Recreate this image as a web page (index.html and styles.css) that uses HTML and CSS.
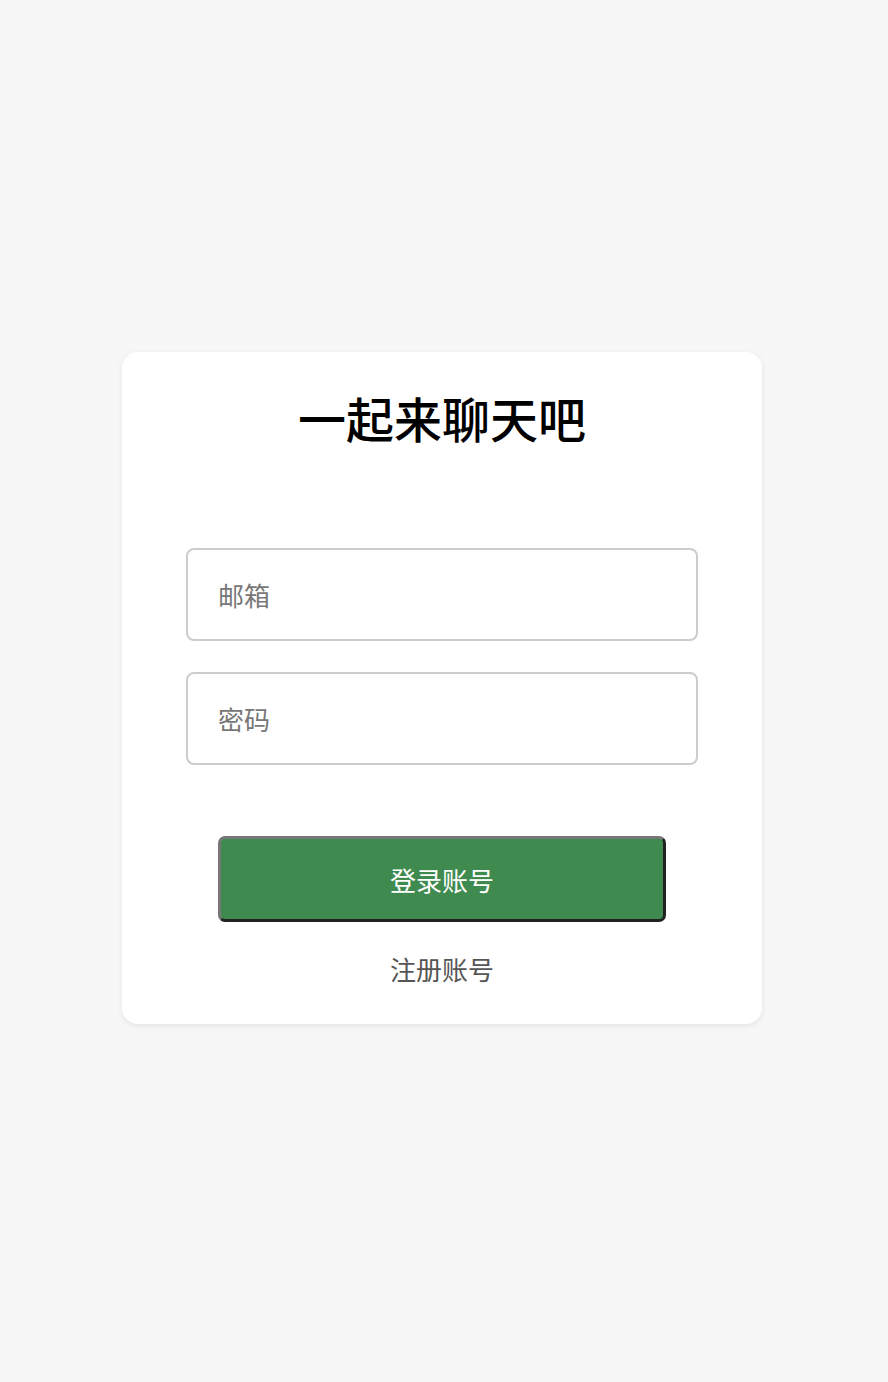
FILE: index.html
```html
<!DOCTYPE html>
<html lang="zh-CN">
<head>
  <meta charset="UTF-8" />
  <meta name="viewport" content="width=device-width, initial-scale=1.0" />
  <title>一起来聊天吧</title>
  <link rel="stylesheet" href="styles.css">
</head>
<body>
  <div class="card">
    <h1>一起来聊天吧</h1>
    <form class="login-form">
      <input type="email" class="field" placeholder="邮箱" />
      <input type="password" class="field" placeholder="密码" />
      <button type="submit" class="login-btn">登录账号</button>
    </form>
    <a class="register" href="#">注册账号</a>
  </div>
</body>
</html>
```

FILE: styles.css
```css
* {
  box-sizing: border-box;
}
body {
  font-family: "Noto Sans CJK SC", "Noto Sans", sans-serif;
  background-color: #f7f7f7;
  margin: 0;
  min-height: 100vh;
  display: flex;
  justify-content: center;
  align-items: center;
  padding: 0 4px 6px 0;
}
.card {
  background-color: #fff;
  width: 640px;
  padding: 29px 64px 36px;
  border-radius: 16px;
  box-shadow: 0 2px 6px rgba(0, 0, 0, 0.08);
  display: flex;
  flex-direction: column;
  align-items: stretch;
}
h1 {
  margin: 0;
  text-align: center;
  font-size: 48px;
  font-weight: 500;
  line-height: 72px;
  color: #000;
}
.login-form {
  margin-top: 95px;
  display: flex;
  flex-direction: column;
  gap: 31px;
}
.field {
  width: 100%;
  height: 93px;
  padding: 0 30px;
  border: 2px solid #ccc;
  border-radius: 8px;
  font-family: inherit;
  font-size: 26px;
  color: #333;
  background: #fff;
  outline: none;
}
.field::placeholder {
  color: #777;
}
.login-btn {
  margin: 40px 32px 0;
  height: 86px;
  background-color: #3f8a4f;
  color: #fff;
  font-family: inherit;
  font-size: 26px;
  border: 3px solid;
  border-color: #777 #222 #222 #777;
  border-radius: 7px;
  cursor: pointer;
}
.register {
  margin-top: 27px;
  text-align: center;
  font-size: 26px;
  line-height: 39px;
  color: #555;
  text-decoration: none;
}
```
